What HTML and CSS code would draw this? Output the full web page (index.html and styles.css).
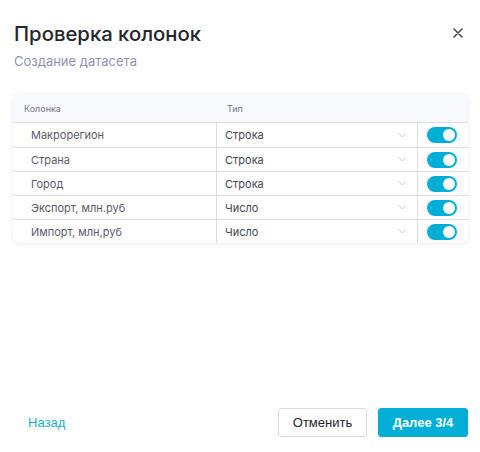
FILE: index.html
```html
<!DOCTYPE html>
<html lang="ru">
<head>
<meta charset="utf-8">
<title>Проверка колонок</title>
<link rel="stylesheet" href="styles.css">
</head>
<body>
<div class="dialog">
  <div class="head">
    <div class="titles">
      <h1 class="title">Проверка колонок</h1>
      <div class="subtitle">Создание датасета</div>
    </div>
    <button class="close" aria-label="Закрыть">
      <svg width="10" height="10" viewBox="0 0 10 10"><path d="M1 1L9 9M9 1L1 9" stroke="#3a3b45" stroke-width="1.4" stroke-linecap="round"/></svg>
    </button>
  </div>

  <div class="table">
    <div class="row header">
      <div class="cell c1">Колонка</div>
      <div class="cell c2">Тип</div>
      <div class="cell c3"></div>
    </div>
    <div class="row">
      <div class="cell c1">Макрорегион</div>
      <div class="cell c2 sel"><span>Строка</span><svg class="chev" width="8" height="5" viewBox="0 0 8 5"><path d="M0.5 0.5L4 4L7.5 0.5" fill="none" stroke="#c9cbd9" stroke-width="1"/></svg></div>
      <div class="cell c3"><span class="toggle"><span class="knob"></span></span></div>
    </div>
    <div class="row">
      <div class="cell c1">Страна</div>
      <div class="cell c2 sel"><span>Строка</span><svg class="chev" width="8" height="5" viewBox="0 0 8 5"><path d="M0.5 0.5L4 4L7.5 0.5" fill="none" stroke="#c9cbd9" stroke-width="1"/></svg></div>
      <div class="cell c3"><span class="toggle"><span class="knob"></span></span></div>
    </div>
    <div class="row">
      <div class="cell c1">Город</div>
      <div class="cell c2 sel"><span>Строка</span><svg class="chev" width="8" height="5" viewBox="0 0 8 5"><path d="M0.5 0.5L4 4L7.5 0.5" fill="none" stroke="#c9cbd9" stroke-width="1"/></svg></div>
      <div class="cell c3"><span class="toggle"><span class="knob"></span></span></div>
    </div>
    <div class="row">
      <div class="cell c1">Экспорт, млн.руб</div>
      <div class="cell c2 sel"><span>Число</span><svg class="chev" width="8" height="5" viewBox="0 0 8 5"><path d="M0.5 0.5L4 4L7.5 0.5" fill="none" stroke="#c9cbd9" stroke-width="1"/></svg></div>
      <div class="cell c3"><span class="toggle"><span class="knob"></span></span></div>
    </div>
    <div class="row">
      <div class="cell c1">Импорт, млн,руб</div>
      <div class="cell c2 sel"><span>Число</span><svg class="chev" width="8" height="5" viewBox="0 0 8 5"><path d="M0.5 0.5L4 4L7.5 0.5" fill="none" stroke="#c9cbd9" stroke-width="1"/></svg></div>
      <div class="cell c3"><span class="toggle"><span class="knob"></span></span></div>
    </div>
  </div>

  <div class="footer">
    <a class="back" href="#">Назад</a>
    <div class="actions">
      <button class="btn cancel">Отменить</button>
      <button class="btn primary">Далее 3/4</button>
    </div>
  </div>
</div>
</body>
</html>
```

FILE: styles.css
```css
* { box-sizing: border-box; }
html, body { margin: 0; padding: 0; background: #ffffff; }
body { font-family: Inter, "Noto Sans", sans-serif; }

.dialog {
  min-height: 452px;
  height: 452px;
  display: flex;
  flex-direction: column;
  padding: 22px 12px 15px 13px;
}

.head {
  display: flex;
  justify-content: space-between;
  align-items: flex-start;
  padding-left: 1px;
}
.title {
  margin: 0;
  font-size: 20.3px;
  line-height: 24px;
  font-weight: 500;
  color: #24252d;
}
.subtitle {
  margin-top: 7px;
  font-size: 13px;
  line-height: 16px;
  color: #8f93b2;
}
.close {
  border: 0;
  background: none;
  padding: 0;
  margin: 6px 5px 0 0;
  width: 10px;
  height: 10px;
  display: flex;
}

.table {
  margin-top: 25px;
  border-radius: 6px;
  box-shadow: 0 1px 4px rgba(40, 45, 80, 0.10), 0 0 1px rgba(40, 45, 80, 0.08);
  overflow: hidden;
  background: #fff;
}
.row {
  display: grid;
  grid-template-columns: 203px 202px 1fr;
  height: 24px;
  border-top: 1px solid #dcdde8;
}
.row.header {
  height: 29px;
  border-top: 0;
  background: #f8f9fd;
  border-bottom: 1px solid #dcdde8;
}
.row.header + .row { border-top: 0; height: 24px; }
.cell {
  display: flex;
  align-items: center;
  font-size: 11px;
  color: #5a5c68;
  white-space: nowrap;
}
.header .cell {
  font-size: 9px;
  color: #737685;
}
.header .c1 { padding-left: 11px; }
.header .c2 { padding-left: 11px; border: 0; }
.header .c3 { border: 0; }
.c1 { padding-left: 18px; }
.c2 {
  padding-left: 8px;
  padding-right: 11px;
  border-left: 1px solid #dcdde8;
  border-right: 1px solid #dcdde8;
  justify-content: space-between;
  color: #464855;
}
.chev { display: block; }
.c3 { justify-content: center; padding-right: 2px; }

.toggle {
  width: 30px;
  height: 16px;
  border-radius: 8px;
  background: #00aed6;
  display: flex;
  align-items: center;
  justify-content: flex-end;
  padding-right: 2px;
}
.knob {
  width: 12px;
  height: 12px;
  border-radius: 50%;
  background: #fff;
}

.footer {
  margin-top: auto;
  display: flex;
  justify-content: space-between;
  align-items: center;
  padding-left: 15px;
}
.back {
  font-family: "Liberation Sans", Arial, sans-serif;
  font-size: 13px;
  color: #1aaed6;
  text-decoration: none;
}
.actions {
  display: flex;
  gap: 11px;
}
.btn {
  font-family: "Liberation Sans", Arial, sans-serif;
  font-size: 13px;
  height: 29px;
  border-radius: 3px;
  padding: 0;
  cursor: pointer;
}
.cancel {
  width: 89px;
  background: #fff;
  border: 1px solid #d9dae6;
  color: #24252d;
}
.primary {
  width: 90px;
  background: #00aed6;
  border: 1px solid #00aed6;
  color: #fff;
  font-weight: bold;
}
```
